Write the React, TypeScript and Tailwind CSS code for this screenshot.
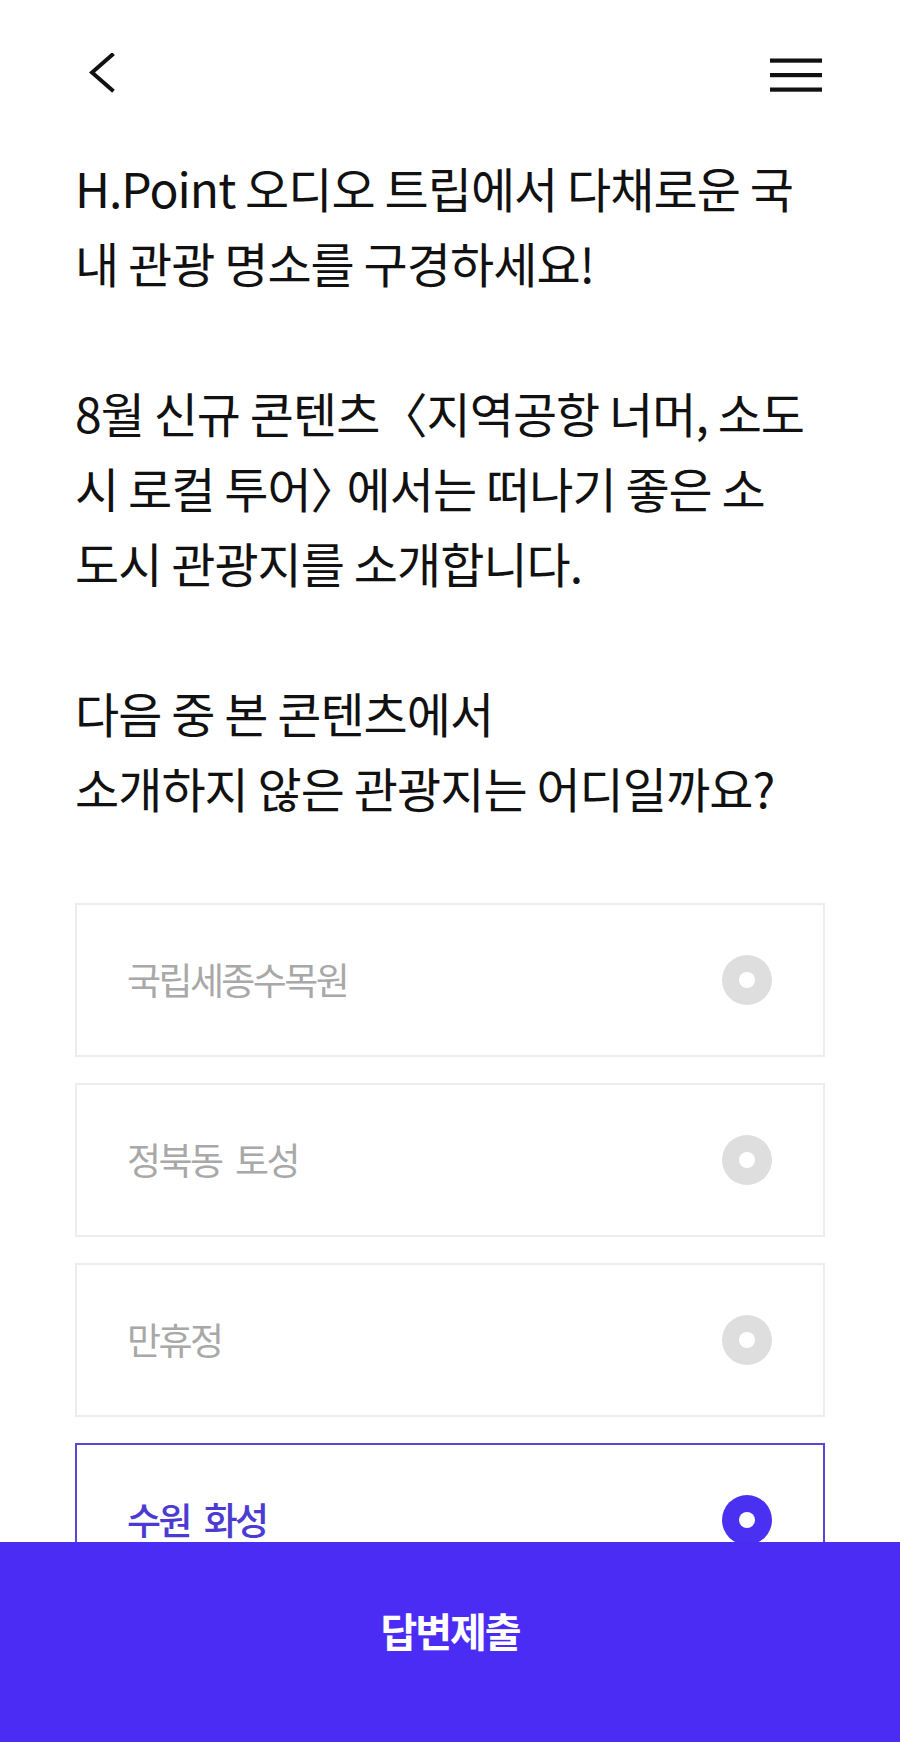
import { useState } from 'react';

const OPTIONS = ['국립세종수목원', '정북동 토성', '만휴정', '수원 화성'];

const FONT = "font-['Noto_Sans_CJK_KR','Noto_Sans',sans-serif]";

function BackIcon() {
  return (
    <svg width="26" height="42" viewBox="0 0 26 42" fill="none">
      <polyline points="23,2 3,19.5 23,37" stroke="#111" strokeWidth="4" strokeLinecap="square" strokeLinejoin="miter" />
    </svg>
  );
}

function MenuIcon() {
  return (
    <svg width="52" height="36" viewBox="0 0 52 36" fill="none">
      <rect x="0" y="1.5" width="52" height="4.2" fill="#111" />
      <rect x="0" y="16" width="52" height="4.2" fill="#111" />
      <rect x="0" y="30.5" width="52" height="4.2" fill="#111" />
    </svg>
  );
}

function Radio({ on }: { on: boolean }) {
  return (
    <span
      className={`flex h-[50px] w-[50px] shrink-0 items-center justify-center rounded-full ${
        on ? 'bg-[#4a30f0]' : 'bg-[#dedede]'
      }`}
    >
      <span className="h-[16px] w-[16px] rounded-full bg-white" />
    </span>
  );
}

export default function App() {
  const [selected, setSelected] = useState(3);

  return (
    <div className={`min-h-screen bg-white pb-[220px] ${FONT}`}>
      {/* Header */}
      <header className="flex h-[150px] items-center justify-between pl-[89px] pr-[78px]">
        <button className="-mt-[2px]">
          <BackIcon />
        </button>
        <button>
          <MenuIcon />
        </button>
      </header>

      {/* Question */}
      <div className="px-[75px] text-[48px] leading-[75px] tracking-[-0.02em] text-[#111] whitespace-nowrap">
        <p>H.Point 오디오 트립에서 다채로운 국</p>
        <p>내 관광 명소를 구경하세요!</p>
        <p>&nbsp;</p>
        <p>8월 신규 콘텐츠〈지역공항 너머, 소도</p>
        <p>
          시 로컬 투어<span className="tracking-[-12px]">〉</span>에서는 떠나기 좋은 소
        </p>
        <p>도시 관광지를 소개합니다.</p>
        <p>&nbsp;</p>
        <p>다음 중 본 콘텐츠에서</p>
        <p>소개하지 않은 관광지는 어디일까요?</p>
      </div>

      {/* Options */}
      <ul className="mt-[78px] flex flex-col gap-[26px] px-[75px]">
        {OPTIONS.map((label, i) => {
          const on = selected === i;
          return (
            <li key={label}>
              <button
                onClick={() => setSelected(i)}
                className={`flex h-[154px] w-full items-center justify-between border-2 pl-[50px] pr-[51px] text-left ${
                  on ? 'border-[#5a45d4]' : 'border-[#ececec]'
                }`}
              >
                <span
                  className={`text-[37px] tracking-[-0.07em] [word-spacing:8px] ${
                    on ? 'font-medium text-[#4b3bd2]' : 'text-[#a8a8a8]'
                  }`}
                >
                  {label}
                </span>
                <Radio on={on} />
              </button>
            </li>
          );
        })}
      </ul>

      {/* Submit */}
      <button className="fixed inset-x-0 bottom-0 flex h-[200px] items-center justify-center bg-[#4b2cf5] pb-[24px] text-[40px] font-bold tracking-[-0.05em] text-white">
        답변제출
      </button>
    </div>
  );
}
